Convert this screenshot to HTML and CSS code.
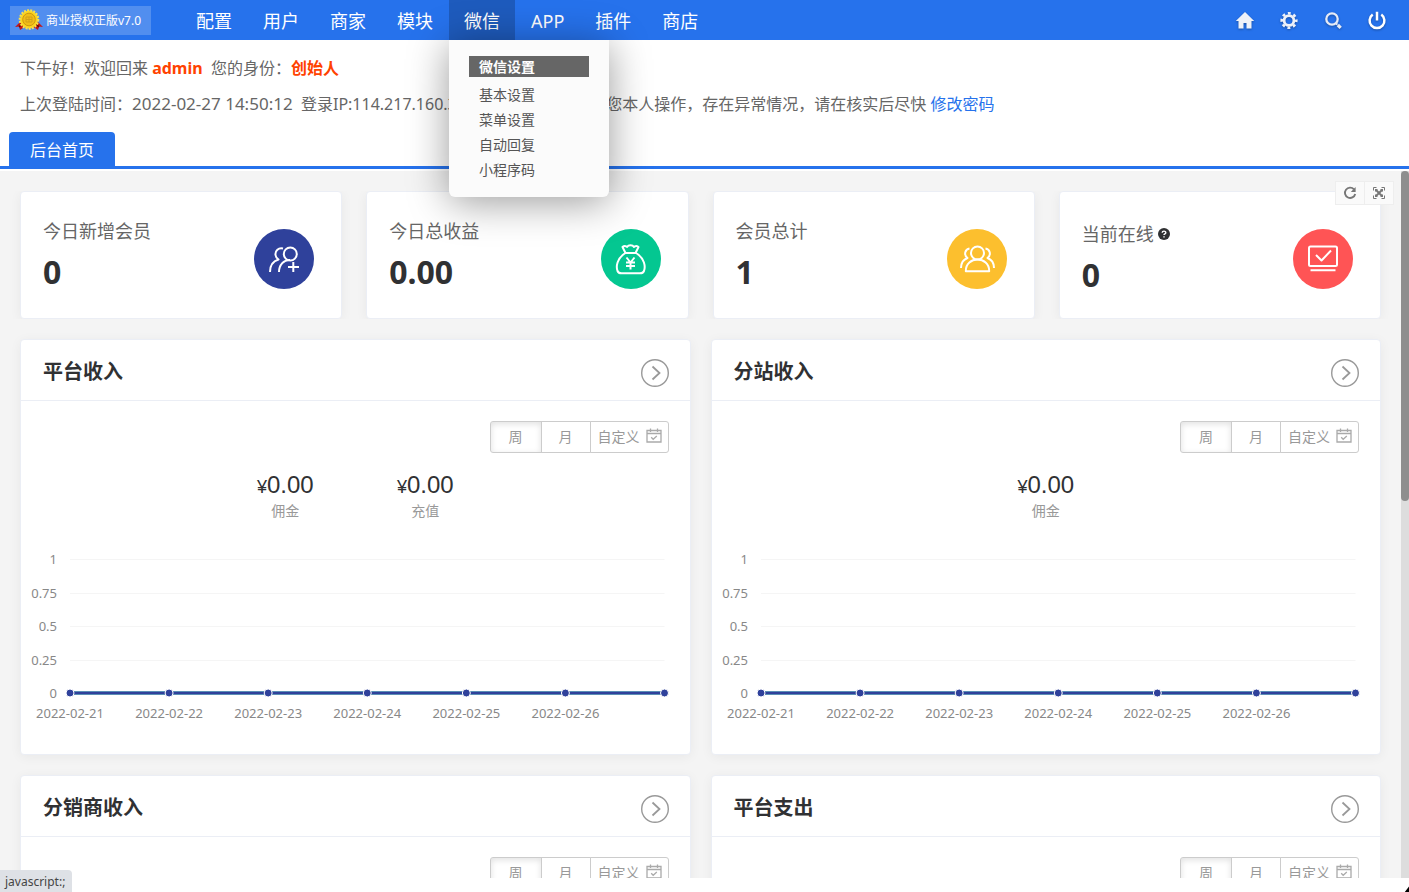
FILE: index.html
```html
<!DOCTYPE html>
<html lang="zh-CN">
<head>
    <meta charset="UTF-8">
    <meta name="viewport" content="width=device-width, initial-scale=1.0">
    <title>后台首页</title>
    <link rel="stylesheet" href="styles.css">
</head>
<body>
    <!-- shared icons -->
    <svg class="sprite" aria-hidden="true">
        <symbol id="icon-next" viewBox="0 0 28 28">
            <circle cx="14" cy="14" r="13.3" fill="none" stroke="#999" stroke-width="1.4"/>
            <path d="M11.5 7.5l7 6.5-7 6.5" fill="none" stroke="#999" stroke-width="1.8"/>
        </symbol>
        <symbol id="icon-date" viewBox="0 0 16 16">
            <path d="M1 2.500h14v11.500H1zM1 5.500h14M4.500 0.500v3.500M11.500 0.500v3.500" fill="none" stroke="#aaa" stroke-width="1.300"/>
            <path d="M5.200 9.300l2 2 3.600-3.200" fill="none" stroke="#aaa" stroke-width="1.300"/>
        </symbol>
    </svg>

    <header class="topbar">
        <div class="license">
            <svg class="medal" viewBox="0 0 28 22">
                <path d="M5 13l-5 5 4-.5 1 3.500 6-4zM23 13l5 5-4-.5-1 3.500-6-4z" fill="#c41616"/>
                <path d="M4 18l3-3M24 18l-3-3" stroke="#5d0b0b" stroke-width="1.500"/>
                <circle cx="14" cy="10.500" r="9" fill="#fbd51f"/>
                <circle cx="14" cy="10.500" r="9.300" fill="none" stroke="#fbe04a" stroke-width="2" stroke-dasharray="2 1.200"/>
                <circle cx="14" cy="10.500" r="6.300" fill="#f0bd18" stroke="#cf9610"/>
                <path d="M11 8h6v5h-6zM11 10.500h6M14 8v5" fill="none" stroke="#d3a018"/>
            </svg>
            <span>商业授权正版v7.0</span>
        </div>
        <nav>
            <ul class="menu">
                <li><a href="#">配置</a></li>
                <li><a href="#">用户</a></li>
                <li><a href="#">商家</a></li>
                <li><a href="#">模块</a></li>
                <li class="active">
                    <a href="#">微信</a>
                    <div class="submenu">
                        <strong>微信设置</strong>
                        <a href="#">基本设置</a>
                        <a href="#">菜单设置</a>
                        <a href="#">自动回复</a>
                        <a href="#">小程序码</a>
                    </div>
                </li>
                <li><a href="#">APP</a></li>
                <li><a href="#">插件</a></li>
                <li><a href="#">商店</a></li>
            </ul>
        </nav>
        <div class="tools">
            <a href="#" aria-label="首页">
                <svg viewBox="0 0 20 20"><path d="M10 2L.8 11h2.700v7.500h5V13h3v5.500h5V11h2.700z" fill="#eef1f8"/></svg>
            </a>
            <a href="#" aria-label="设置">
                <svg viewBox="0 0 20 20">
                    <circle cx="10" cy="10.500" r="7.300" fill="none" stroke="#eef1f8" stroke-width="2.600" stroke-dasharray="2.870 2.870" stroke-dashoffset="1.400"/>
                    <circle cx="10" cy="10.500" r="4.900" fill="none" stroke="#eef1f8" stroke-width="2.800"/>
                </svg>
            </a>
            <a href="#" aria-label="搜索">
                <svg viewBox="0 0 20 20">
                    <circle cx="9" cy="9" r="5.700" fill="none" stroke="#e6ebf7" stroke-width="2.300"/>
                    <path d="M13 13.300l1.300 1.300" stroke="#e6ebf7" stroke-width="2"/>
                    <path d="M14.800 15l2.900 2.900" stroke="#e6ebf7" stroke-width="3.200"/>
                </svg>
            </a>
            <a href="#" aria-label="退出">
                <svg viewBox="0 0 20 20"><path d="M5.700 4.600a7.400 7.400 0 1 0 8.600 0M10 1.800v8.700" fill="none" stroke="#fff" stroke-width="2.500"/></svg>
            </a>
        </div>
    </header>

    <section class="welcome">
        <p>下午好！欢迎回来 <b>admin</b>&nbsp; 您的身份：<b>创始人</b></p>
        <p>上次登陆时间：<span class="time">2022-02-27 14:50:12</span>&nbsp; 登录IP:114.217.160.36&nbsp;&nbsp; ，请注意如果不是您本人操作，存在异常情况，请在核实后尽快 <a href="#">修改密码</a></p>
    </section>

    <div class="tabs"><a href="#">后台首页</a></div>

    <div class="content">
        <main class="page">
            <div class="stats">
                <div class="card stat">
                    <div class="stat-text">
                        <div class="stat-label">今日新增会员</div>
                        <div class="stat-value">0</div>
                    </div>
                    <div class="stat-icon blue">
                        <svg viewBox="0 0 60 60">
                            <path d="M29 19.500c-4.500-1-8 2-7.500 6.500.2 2 1.500 3.500 3 4.500-5 1.500-8.500 6-8.500 12.500M36 31c-6-.5-11 5-11 12"/>
                            <circle cx="36.300" cy="25" r="6.500"/>
                            <path d="M39.300 33v10M34 38h11"/>
                        </svg>
                    </div>
                </div>
                <div class="card stat">
                    <div class="stat-text">
                        <div class="stat-label">今日总收益</div>
                        <div class="stat-value">0.00</div>
                    </div>
                    <div class="stat-icon green">
                        <svg viewBox="0 0 60 60">
                            <path d="M24.500 24c-9 5.500-9.500 14-8 18 .7 1.700 2 2.300 4 2.300h18.500c2 0 3.300-.6 4-2.300 1.500-4 1-12.500-8-18z"/>
                            <path d="M24.500 24l-3-6c1.500-1.500 3.500-1.500 4.500 0 1.500-2.500 5.500-2.500 7 0 1-1.500 3.500-1.500 4.500 0l-3 6"/>
                            <path d="M25.500 28.500l4 5 4-5M29.500 33.500v7M25 33.500h9M25 37h9"/>
                        </svg>
                    </div>
                </div>
                <div class="card stat">
                    <div class="stat-text">
                        <div class="stat-label">会员总计</div>
                        <div class="stat-value">1</div>
                    </div>
                    <div class="stat-icon yellow">
                        <svg viewBox="0 0 60 60">
                            <circle cx="30.500" cy="24" r="6.500"/>
                            <path d="M18.800 42.200c-.3-15.500 23.700-15.500 23.400 0z"/>
                            <path d="M22.500 19.500c-4.500.5-6 6.500-2 9.500-4 1.500-6.500 5-6.500 10M38.500 19.500c4.500.5 6 6.500 2 9.500 4 1.500 6.500 5 6.500 10"/>
                        </svg>
                    </div>
                </div>
                <div class="card stat">
                    <div class="stat-text has-tip">
                        <div class="stat-label">当前在线
                            <svg class="tip" viewBox="0 0 12 12"><circle cx="6" cy="6" r="6" fill="#303133"/><path d="M4.200 4.800c0-2.200 3.600-2.200 3.600-.1 0 1.300-1.800 1.100-1.800 2.400M6 8.200v1.300" fill="none" stroke="#fff" stroke-width="1.400"/></svg>
                        </div>
                        <div class="stat-value">0</div>
                    </div>
                    <div class="stat-icon red">
                        <svg viewBox="0 0 60 60">
                            <rect x="16" y="17.500" width="28" height="19.500" rx="1.500"/>
                            <path d="M23 26l5.500 5.500 9.500-10M17.500 41.300h25"/>
                        </svg>
                    </div>
                </div>
            </div>

            <div class="panels">
                <section class="card panel">
                    <div class="panel-head">
                        <h2>平台收入</h2>
                        <a href="#" aria-label="更多"><svg><use href="#icon-next"/></svg></a>
                    </div>
                    <div class="range">
                        <button type="button" class="on">周</button>
                        <button type="button">月</button>
                        <button type="button" class="custom">自定义<svg><use href="#icon-date"/></svg></button>
                    </div>
                    <div class="totals">
                        <div><p><small>¥</small>0.00</p><span>佣金</span></div>
                        <div><p><small>¥</small>0.00</p><span>充值</span></div>
                    </div>
                    <div class="chart"></div>
                </section>
                <section class="card panel">
                    <div class="panel-head">
                        <h2>分站收入</h2>
                        <a href="#" aria-label="更多"><svg><use href="#icon-next"/></svg></a>
                    </div>
                    <div class="range">
                        <button type="button" class="on">周</button>
                        <button type="button">月</button>
                        <button type="button" class="custom">自定义<svg><use href="#icon-date"/></svg></button>
                    </div>
                    <div class="totals">
                        <div><p><small>¥</small>0.00</p><span>佣金</span></div>
                    </div>
                    <div class="chart"></div>
                </section>
                <section class="card panel">
                    <div class="panel-head">
                        <h2>分销商收入</h2>
                        <a href="#" aria-label="更多"><svg><use href="#icon-next"/></svg></a>
                    </div>
                    <div class="range">
                        <button type="button" class="on">周</button>
                        <button type="button">月</button>
                        <button type="button" class="custom">自定义<svg><use href="#icon-date"/></svg></button>
                    </div>
                </section>
                <section class="card panel">
                    <div class="panel-head">
                        <h2>平台支出</h2>
                        <a href="#" aria-label="更多"><svg><use href="#icon-next"/></svg></a>
                    </div>
                    <div class="range">
                        <button type="button" class="on">周</button>
                        <button type="button">月</button>
                        <button type="button" class="custom">自定义<svg><use href="#icon-date"/></svg></button>
                    </div>
                </section>
            </div>
        </main>
        <div class="scrollbar"><div class="thumb"></div></div>
        <div class="page-tools">
            <button type="button" aria-label="刷新">
                <svg viewBox="0 0 14 14"><path d="M11 3.300A5.200 5.200 0 1 0 12.200 8" fill="none" stroke="#777" stroke-width="1.900"/><path d="M12.600 1v5H7.800z" fill="#777"/></svg>
            </button>
            <button type="button" aria-label="全屏">
                <svg viewBox="0 0 14 14"><path d="M1.500 4.500v-3h3M9.500 1.500h3v3M12.500 9.500v3h-3M4.500 12.500h-3v-3" fill="none" stroke="#777"/><path d="M4 4l6 6M10 4l-6 6" stroke="#777" stroke-width="2"/><path d="M3 3h3L3 6zM11 3v3L8 3zM3 11V8l3 3zM11 11H8l3-3z" fill="#777"/></svg>
            </button>
        </div>
    </div>

    <div class="status">javascript:;</div>
    <svg class="corner" viewBox="0 0 10 10"><path d="M10 1v9H3z" fill="#000"/></svg>

    <script src="chart.js"></script>
</body>
</html>
```

FILE: styles.css
```css
* {
    box-sizing: border-box;
}

body {
    margin: 0;
    height: 100vh;
    display: flex;
    flex-direction: column;
    overflow: hidden;
    background: #fff;
    color: #666;
    font-family: "Noto Sans", "Noto Sans CJK SC", sans-serif;
    font-size: 16px;
}

a {
    color: inherit;
    text-decoration: none;
}

p, h2, ul {
    margin: 0;
    padding: 0;
}

button {
    font-family: inherit;
    cursor: pointer;
}

.sprite {
    display: none;
}

/* top bar */
.topbar {
    height: 40px;
    flex: none;
    display: flex;
    align-items: center;
    padding: 0 22px 0 10px;
    background: #2672ec;
    color: #fff;
}

.license {
    width: 141px;
    height: 29px;
    display: flex;
    align-items: center;
    gap: 3px;
    padding-left: 5px;
    background: rgba(255, 255, 255, 0.2);
    font-size: 12px;
    white-space: nowrap;
}

.medal {
    width: 28px;
    height: 22px;
}

.menu {
    display: flex;
    gap: 1px;
    margin-left: 30px;
    list-style: none;
    font-size: 18px;
    line-height: 42px;
}

.menu li {
    position: relative;
    height: 40px;
}

.menu li > a {
    display: block;
    padding: 0 15px;
}

.menu .active {
    background: #1e5bbd;
}

.submenu {
    position: absolute;
    left: 0;
    top: 40px;
    z-index: 10;
    width: 160px;
    padding: 16px 20px 15px;
    background: #fbfbfb;
    border-radius: 0 0 6px 6px;
    box-shadow: 0 5px 40px rgba(0, 0, 0, 0.4);
    color: #555;
    font-size: 14px;
    line-height: 25px;
}

.submenu strong {
    display: block;
    margin-bottom: 5px;
    padding-left: 10px;
    background: #666;
    color: #fff;
    line-height: 21px;
}

.submenu a {
    display: block;
    padding-left: 10px;
}

.tools {
    display: flex;
    gap: 24px;
    margin-left: auto;
}

.tools a {
    height: 20px;
}

.tools svg {
    display: block;
    width: 20px;
    height: 20px;
    filter: drop-shadow(0 1px 1px rgba(0, 0, 0, 0.3));
}

/* greeting */
.welcome {
    flex: none;
    padding: 10px 20px 0;
    line-height: 36px;
    white-space: nowrap;
}

.welcome b {
    color: #ff4200;
}

.welcome a {
    color: #2672ec;
}

.welcome .time {
    font-size: 17px;
}

.tabs {
    flex: none;
    display: flex;
    margin-top: 10px;
    padding-left: 9px;
    border-bottom: 3px solid #2672ec;
}

.tabs a {
    height: 34px;
    padding: 0 21px;
    background: #2672ec;
    border-radius: 4px 4px 0 0;
    color: #fff;
    line-height: 36px;
}

/* page area */
.content {
    position: relative;
    flex: 1;
    min-height: 0;
    display: flex;
    margin: 2px 0 14px;
    overflow: hidden;
    background: #f4f4f4;
}

.page {
    flex: 1;
    height: 100%;
    padding: 20px;
    overflow: hidden;
}

.scrollbar {
    width: 8px;
    flex: none;
    background: #ddd;
}

.thumb {
    height: 330px;
    background: #8e8e8e;
    border-radius: 4px;
}

.page-tools {
    position: absolute;
    top: 10px;
    right: 15px;
    display: flex;
}

.page-tools button {
    width: 30px;
    height: 24px;
    padding: 0;
    border: 1px solid #eee;
    background: #fafafa;
}

.page-tools button + button {
    margin-left: -1px;
}

.page-tools svg {
    display: block;
    width: 14px;
    height: 14px;
    margin: 0 auto;
}

.card {
    background: #fff;
    border: 1px solid #ebeef5;
    border-radius: 4px;
    box-shadow: 0 2px 12px rgba(0, 0, 0, 0.05);
}

.stats {
    display: grid;
    grid-template-columns: repeat(4, 1fr);
    gap: 24px;
    overflow: hidden;
    margin: 0 -20px;
    padding: 0 20px;
}

.stat {
    display: flex;
    justify-content: space-between;
    height: 128px;
    padding: 0 27px 0 22px;
}

.stat-text {
    padding-top: 25px;
}

.stat-text.has-tip {
    padding-top: 28px;
}

.stat-label {
    font-size: 18px;
    line-height: 28px;
}

.stat-value {
    color: #303133;
    font-size: 32px;
    font-weight: bold;
    line-height: 54px;
}

.tip {
    width: 12px;
    height: 12px;
    vertical-align: 1px;
}

.stat-icon {
    width: 60px;
    height: 60px;
    margin-top: 37px;
    border-radius: 50%;
}

.stat-icon svg {
    display: block;
    fill: none;
    stroke: #fff;
    stroke-width: 2;
    stroke-linejoin: round;
}

.blue {
    background: #2f419b;
}

.green {
    background: #04c791;
}

.yellow {
    background: #fcbf2e;
}

.red {
    background: #ff5455;
}

.panels {
    display: grid;
    grid-template-columns: repeat(2, 1fr);
    gap: 20px;
    margin-top: 20px;
}

.panel {
    height: 416px;
}

.panel-head {
    height: 61px;
    display: flex;
    justify-content: space-between;
    padding: 0 21px 0 22px;
    border-bottom: 1px solid #ebeef5;
}

.panel-head h2 {
    color: #303133;
    font-size: 20px;
    line-height: 64px;
}

.panel-head svg {
    display: block;
    width: 28px;
    height: 28px;
    margin-top: 19px;
}

.range {
    display: flex;
    justify-content: flex-end;
    padding: 20px 21px 0;
}

.range button {
    width: 50px;
    height: 32px;
    margin-left: -1px;
    padding: 0 0 2px;
    border: 1px solid #ccc;
    background: #fff;
    color: #999;
    font-size: 14px;
}

.range .on {
    width: 52px;
    border-radius: 3px 0 0 3px;
    box-shadow: inset 0 2px 6px rgba(0, 0, 0, 0.12);
}

.range .custom {
    width: 79px;
    display: flex;
    align-items: center;
    gap: 6px;
    padding-left: 7px;
    border-radius: 0 3px 3px 0;
}

.range svg {
    width: 16px;
    height: 16px;
}

.totals {
    display: flex;
    justify-content: center;
    margin-top: 17px;
    color: #999;
    font-size: 14px;
    line-height: 18px;
    text-align: center;
}

.totals div {
    width: 140px;
}

.totals p {
    color: #303133;
    font-family: "Liberation Sans", Arial, sans-serif;
    font-size: 24px;
    line-height: 30px;
}

.totals small {
    font-size: 18px;
}

.chart {
    margin-top: 27px;
    padding: 0 25px 0 49px;
}

.chart svg {
    display: block;
    width: 100%;
    height: 180px;
    overflow: visible;
}

.chart text {
    fill: #888;
    font-size: 13px;
}

.chart .grid {
    stroke: #f5f5f5;
}

.chart .line-back {
    stroke: #5b8fb5;
    stroke-width: 4;
}

.chart .line {
    stroke: #2f419b;
    stroke-width: 2;
}

.chart circle {
    fill: #2f419b;
    stroke: #fff;
    stroke-width: 1;
}

/* link hint */
.status {
    position: absolute;
    left: 0;
    bottom: 0;
    width: 72px;
    height: 22px;
    padding-left: 5px;
    background: #dee1e6;
    border-radius: 0 4px 0 0;
    color: #444;
    font-size: 12px;
    line-height: 23px;
}

.corner {
    position: absolute;
    right: 0;
    bottom: 0;
    width: 6px;
    height: 6px;
}
```

FILE: chart.js
```js
const days = ['2022-02-21', '2022-02-22', '2022-02-23', '2022-02-24', '2022-02-25', '2022-02-26', ''];
const ticks = ['1', '0.75', '0.5', '0.25', '0'];

function drawChart(box) {
    let svg = '<svg>';
    ticks.forEach((t, i) => {
        const y = 12 + Math.round(i * 33.5);
        if (t !== '0') {
            svg += `<line class="grid" x1="0" x2="100%" y1="${y + 0.5}" y2="${y + 0.5}"/>`;
        }
        svg += `<text x="-13" y="${y + 5}" text-anchor="end">${t}</text>`;
    });
    svg += '<line class="line-back" x1="0" x2="100%" y1="146" y2="146"/>';
    svg += '<line class="line" x1="0" x2="100%" y1="146" y2="146"/>';
    days.forEach((d, i) => {
        const x = i * 100 / (days.length - 1) + '%';
        svg += `<circle cx="${x}" cy="146" r="4"/>`;
        svg += `<text x="${x}" y="171" text-anchor="middle">${d}</text>`;
    });
    box.innerHTML = svg + '</svg>';
}

document.querySelectorAll('.chart').forEach(drawChart);
```
